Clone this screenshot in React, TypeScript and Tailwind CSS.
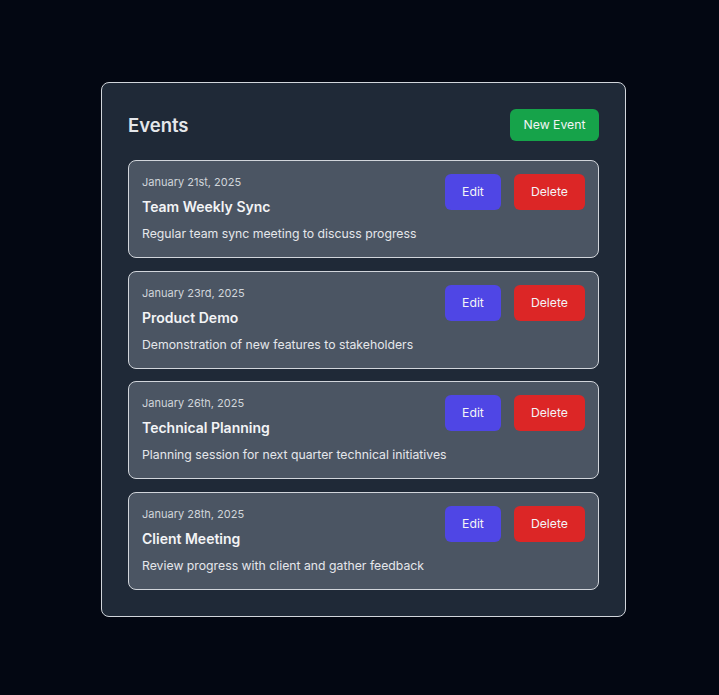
const events = [
  {
    date: "January 21st, 2025",
    title: "Team Weekly Sync",
    description: "Regular team sync meeting to discuss progress",
  },
  {
    date: "January 23rd, 2025",
    title: "Product Demo",
    description: "Demonstration of new features to stakeholders",
  },
  {
    date: "January 26th, 2025",
    title: "Technical Planning",
    description: "Planning session for next quarter technical initiatives",
  },
  {
    date: "January 28th, 2025",
    title: "Client Meeting",
    description: "Review progress with client and gather feedback",
  },
];

function EventCard({ date, title, description }: (typeof events)[number]) {
  return (
    <div className="flex items-start justify-between rounded-lg border border-[#d1d5db] bg-[#4b5563] p-[13px]">
      <div className="min-w-0">
        <p className="text-[11px] leading-4 text-[#d1d5db]">{date}</p>
        <h3 className="mt-[7px] text-[14px] leading-5 font-semibold text-[#f3f4f6]">{title}</h3>
        <p className="mt-[7px] whitespace-nowrap text-[12.25px] leading-5 text-[#e5e7eb]">
          {description}
        </p>
      </div>
      <div className="flex shrink-0 gap-[13px]">
        <button className="rounded-md bg-[#4f46e5] px-[17px] py-2 text-[12.25px] leading-5 text-[#f3f4f6]">
          Edit
        </button>
        <button className="rounded-md bg-[#dc2626] px-[17px] py-2 text-[12.25px] leading-5 text-[#f3f4f6]">
          Delete
        </button>
      </div>
    </div>
  );
}

export default function App() {
  return (
    <div className="min-h-screen bg-[#030712] pl-[101px] pt-[82px] font-['Inter',sans-serif]">
      <div className="w-[525px] rounded-lg border border-[#d1d5db] bg-[#1f2937] p-[26px]">
        <div className="mb-[19px] flex items-center justify-between">
          <h1 className="text-[18.5px] leading-7 font-semibold text-[#e5e7eb]">Events</h1>
          <button className="rounded-md bg-[#16a34a] px-[13.5px] py-1.5 text-[12.25px] leading-5 text-[#f3f4f6]">
            New Event
          </button>
        </div>
        <div className="flex flex-col gap-[12.67px]">
          {events.map((e) => (
            <EventCard key={e.title} {...e} />
          ))}
        </div>
      </div>
    </div>
  );
}
